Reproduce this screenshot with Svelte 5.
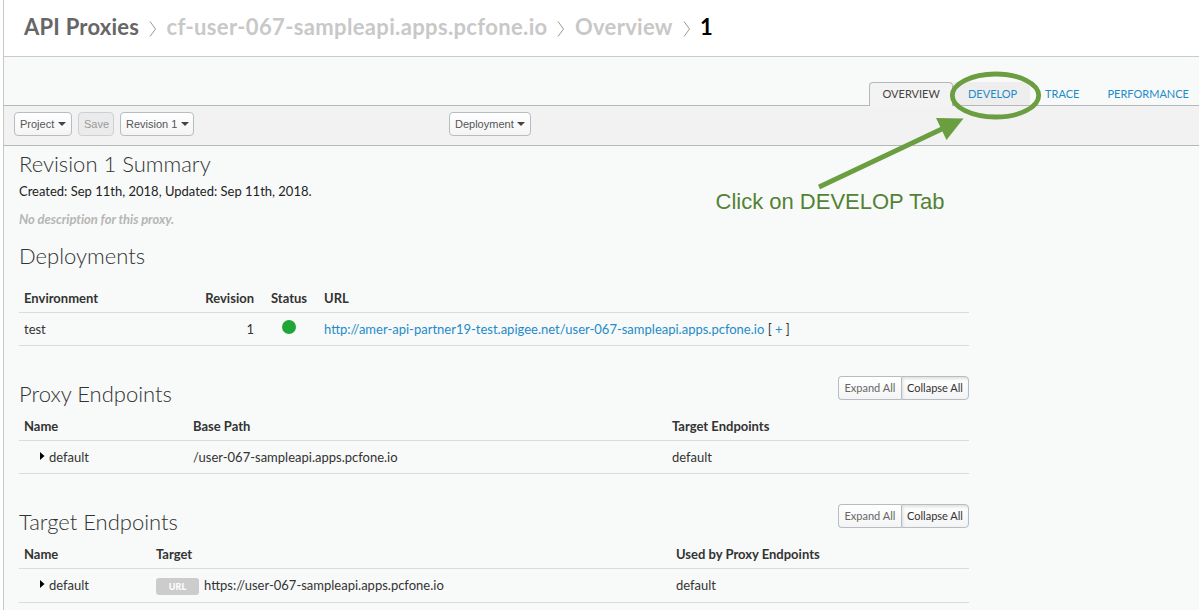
<script>
  const crumbs = [
    { label: 'API Proxies', kind: 'root' },
    { label: 'cf-user-067-sampleapi.apps.pcfone.io', kind: 'muted' },
    { label: 'Overview', kind: 'muted' },
    { label: '1', kind: 'current' }
  ];
</script>

{#snippet toggle()}
  <div class="group">
    <button class="expand">Expand All</button>
    <button class="collapse">Collapse All</button>
  </div>
{/snippet}

{#snippet arrow()}
  <svg class="tri" width="5" height="8" viewBox="0 0 5 8"><path d="M0 0v8L4.5 4z" fill="#000" /></svg>
{/snippet}

{#snippet caret()}
  <svg width="8" height="4" viewBox="0 0 8 4"><path d="M0 0h8L4 4z" fill="#444" /></svg>
{/snippet}

<div class="page">
  <header>
    {#each crumbs as c, i}
      {#if i > 0}
        <svg class="sep" width="8" height="16" viewBox="0 0 8 16"><path d="M1 .5L6.5 8L1 15.5" fill="none" stroke="#999" stroke-width="1" /></svg>
      {/if}
      <span class="crumb {c.kind} c{i}">{c.label}</span>
    {/each}
  </header>

  <nav>
    <a class="tab active">OVERVIEW</a>
    <a class="tab hover">DEVELOP</a>
    <a class="tab trace">TRACE</a>
    <a class="tab perf">PERFORMANCE</a>
  </nav>

  <div class="toolbar">
    <button class="b1">Project {@render caret()}</button>
    <button class="b2" disabled>Save</button>
    <button class="b3">Revision 1 {@render caret()}</button>
    <button class="b4">Deployment {@render caret()}</button>
  </div>

  <main>
    <h2>Revision 1 Summary</h2>
    <p class="created">Created: Sep 11th, 2018, Updated: Sep 11th, 2018.</p>
    <p class="nodesc">No description for this proxy.</p>

    <h2 class="h-dep">Deployments</h2>
    <div class="row head dep">
      <span>Environment</span><span class="r">Revision</span><span>Status</span><span>URL</span>
    </div>
    <div class="row dep">
      <span>test</span><span class="r">1</span><span class="status"><i></i></span>
      <span><a>http://amer-api-partner19-test.apigee.net/user-067-sampleapi.apps.pcfone.io</a> [ <a>+</a> ]</span>
    </div>

    <div class="title"><h2>Proxy Endpoints</h2>{@render toggle()}</div>
    <div class="row head prox">
      <span>Name</span><span>Base Path</span><span>Target Endpoints</span>
    </div>
    <div class="row prox">
      <span class="name">{@render arrow()}default</span><span>/user-067-sampleapi.apps.pcfone.io</span><span>default</span>
    </div>

    <div class="title"><h2>Target Endpoints</h2>{@render toggle()}</div>
    <div class="row head targ">
      <span>Name</span><span>Target</span><span>Used by Proxy Endpoints</span>
    </div>
    <div class="row targ last">
      <span class="name">{@render arrow()}default</span><span class="target"><b class="badge">URL</b>https://user-067-sampleapi.apps.pcfone.io</span><span>default</span>
    </div>
  </main>

  <svg class="note" width="1199" height="220" viewBox="0 0 1199 220">
    <ellipse cx="995.5" cy="95.5" rx="43.2" ry="21.5" fill="none" stroke="#6a9e40" stroke-width="4.8" />
    <path d="M819 187L944 128" stroke="#6a9e40" stroke-width="4.8" fill="none" />
    <path d="M936 118L963.5 118.5L946.5 140z" fill="#6a9e40" />
  </svg>
  <div class="callout">Click on DEVELOP Tab</div>
</div>

<style>
  :global(body) { margin: 0; background: #fff; }
  .page {
    position: relative;
    box-sizing: border-box;
    width: 1199px;
    height: 610px;
    overflow: hidden;
    padding-left: 3px;
    background: #fff;
    font: 13px/20px Lato, sans-serif;
    color: #333;
  }
  header, nav, .toolbar, main { border-left: 1px solid #c8c8c8; box-sizing: border-box; }
  header {
    display: flex;
    height: 57px;
    padding: 0 0 0 20px;
    border-bottom: 1px solid #c8cbca;
    background: #fff;
  }
  .crumb { font-size: 22px; line-height: 54px; font-weight: 700; white-space: nowrap; }
  .root { color: #666; }
  .muted { color: #c8c8c8; }
  .current { color: #000; }
  .c0 { width: 115px; letter-spacing: .23px; }
  .c1 { width: 380.5px; letter-spacing: .35px; }
  .c2 { width: 98px; letter-spacing: .3px; }
  .sep { margin: 21px 10px 0 10px; }
  .sep + .c1 { margin-left: -.5px; }
  .c3 { margin-left: -1px; }
  nav {
    display: flex;
    align-items: flex-end;
    justify-content: flex-end;
    height: 49px;
    background: #f8faf9;
    border-bottom: 1px solid #b5b8b8;
  }
  .tab {
    box-sizing: border-box;
    height: 23px;
    line-height: 23px;
    font-size: 11px;
    color: #238bc9;
    white-space: nowrap;
  }
  .active {
    width: 84px;
    height: 24px;
    margin-bottom: -1px;
    padding-left: 12.5px;
    border: 1px solid #b5b8b8;
    border-bottom: 0;
    border-radius: 4px 4px 0 0;
    background: #f3f3f3;
    color: #444;
    line-height: 22px;
  }
  .hover { width: 77px; padding-left: 15px; background: #eee; }
  .trace { width: 77px; padding-left: 15px; }
  .perf { width: 92px; padding-left: .5px; }
  .toolbar {
    display: flex;
    height: 40px;
    padding: 6px 0 0 10px;
    background: #f2f2f2;
    border-bottom: 1px solid #b5b8b8;
  }
  button {
    display: flex;
    align-items: center;
    gap: 3.5px;
    box-sizing: border-box;
    height: 24px;
    padding: 0 0 0 5px;
    border: 1px solid #b4bdc4;
    border-radius: 4px;
    background: linear-gradient(#fff, #f4f4f4);
    color: #555;
    font: 11px/22px "Liberation Sans", Arial, sans-serif;
    white-space: nowrap;
  }
  .b1 { width: 58px; }
  .b2 { width: 36px; margin-left: 6px; background: #ebebeb; border-color: #cdd1d4; color: #999; }
  .b3 { width: 74px; margin-left: 6px; }
  .b4 { width: 82px; margin-left: 255px; }
  main { height: 464px; padding: 0 0 0 15px; background: #f8faf9; }
  h2, p { margin: 0; white-space: nowrap; }
  h2 { font-size: 22px; font-weight: 300; line-height: 36px; height: 35px; color: #333; }
  .created { height: 20px; line-height: 20px; color: #222; }
  .nodesc { height: 20px; margin-top: 8px; color: #b5b5b5; font-weight: 700; font-style: italic; font-size: 13px; letter-spacing: -.07px; }
  .h-dep { margin-top: 9px; height: 46px; }
  .row {
    display: grid;
    box-sizing: border-box;
    width: 950px;
    height: 33px;
    padding-left: 5px;
    line-height: 32px;
    border-bottom: 1px solid #d9dcdb;
    white-space: nowrap;
  }
  .head { height: 29px; line-height: 28px; font-weight: 700; }
  .dep { grid-template-columns: 130px 100px 70px 1fr; }
  .dep span:nth-child(3) { padding-left: 17px; }
  .r { text-align: right; }
  .status i { display: block; width: 14px; height: 14px; margin: 7px 0 0 11px; border-radius: 50%; background: #20a636; }
  a { color: #238bc9; }
  .title { display: flex; justify-content: space-between; width: 950px; height: 66px; box-sizing: border-box; padding-top: 30px; }
  .group { display: flex; }
  .group button { font: 11px/22px Lato, sans-serif; }
  .group .expand { width: 63px; padding-left: 5.5px; border-right: 0; border-radius: 4px 0 0 4px; color: #666; }
  .group .collapse { width: 68px; padding-left: 5px; border-radius: 0 4px 4px 0; color: #333; box-shadow: inset 1px 2px 3px rgba(0, 0, 0, .12); }
  .prox { grid-template-columns: 169px 479px 1fr; }
  .targ { grid-template-columns: 132px 520px 1fr; }
  .last { height: 34px; }
  .name { display: flex; padding-left: 16px; }
  .tri { margin: 11px 4px 0 0; }
  .target { display: flex; }
  .badge {
    width: 43px;
    height: 17px;
    margin: 9px 5px 0 0;
    border-radius: 3px;
    background: #ccc;
    color: #fff;
    font: 900 9px/17px Lato, sans-serif;
    text-align: center;
  }
  .note { position: absolute; left: 0; top: 0; }
  .callout { position: absolute; left: 715.5px; top: 189px; font: 22px/26px "Liberation Sans", Arial, sans-serif; color: #548235; white-space: nowrap; }
</style>
